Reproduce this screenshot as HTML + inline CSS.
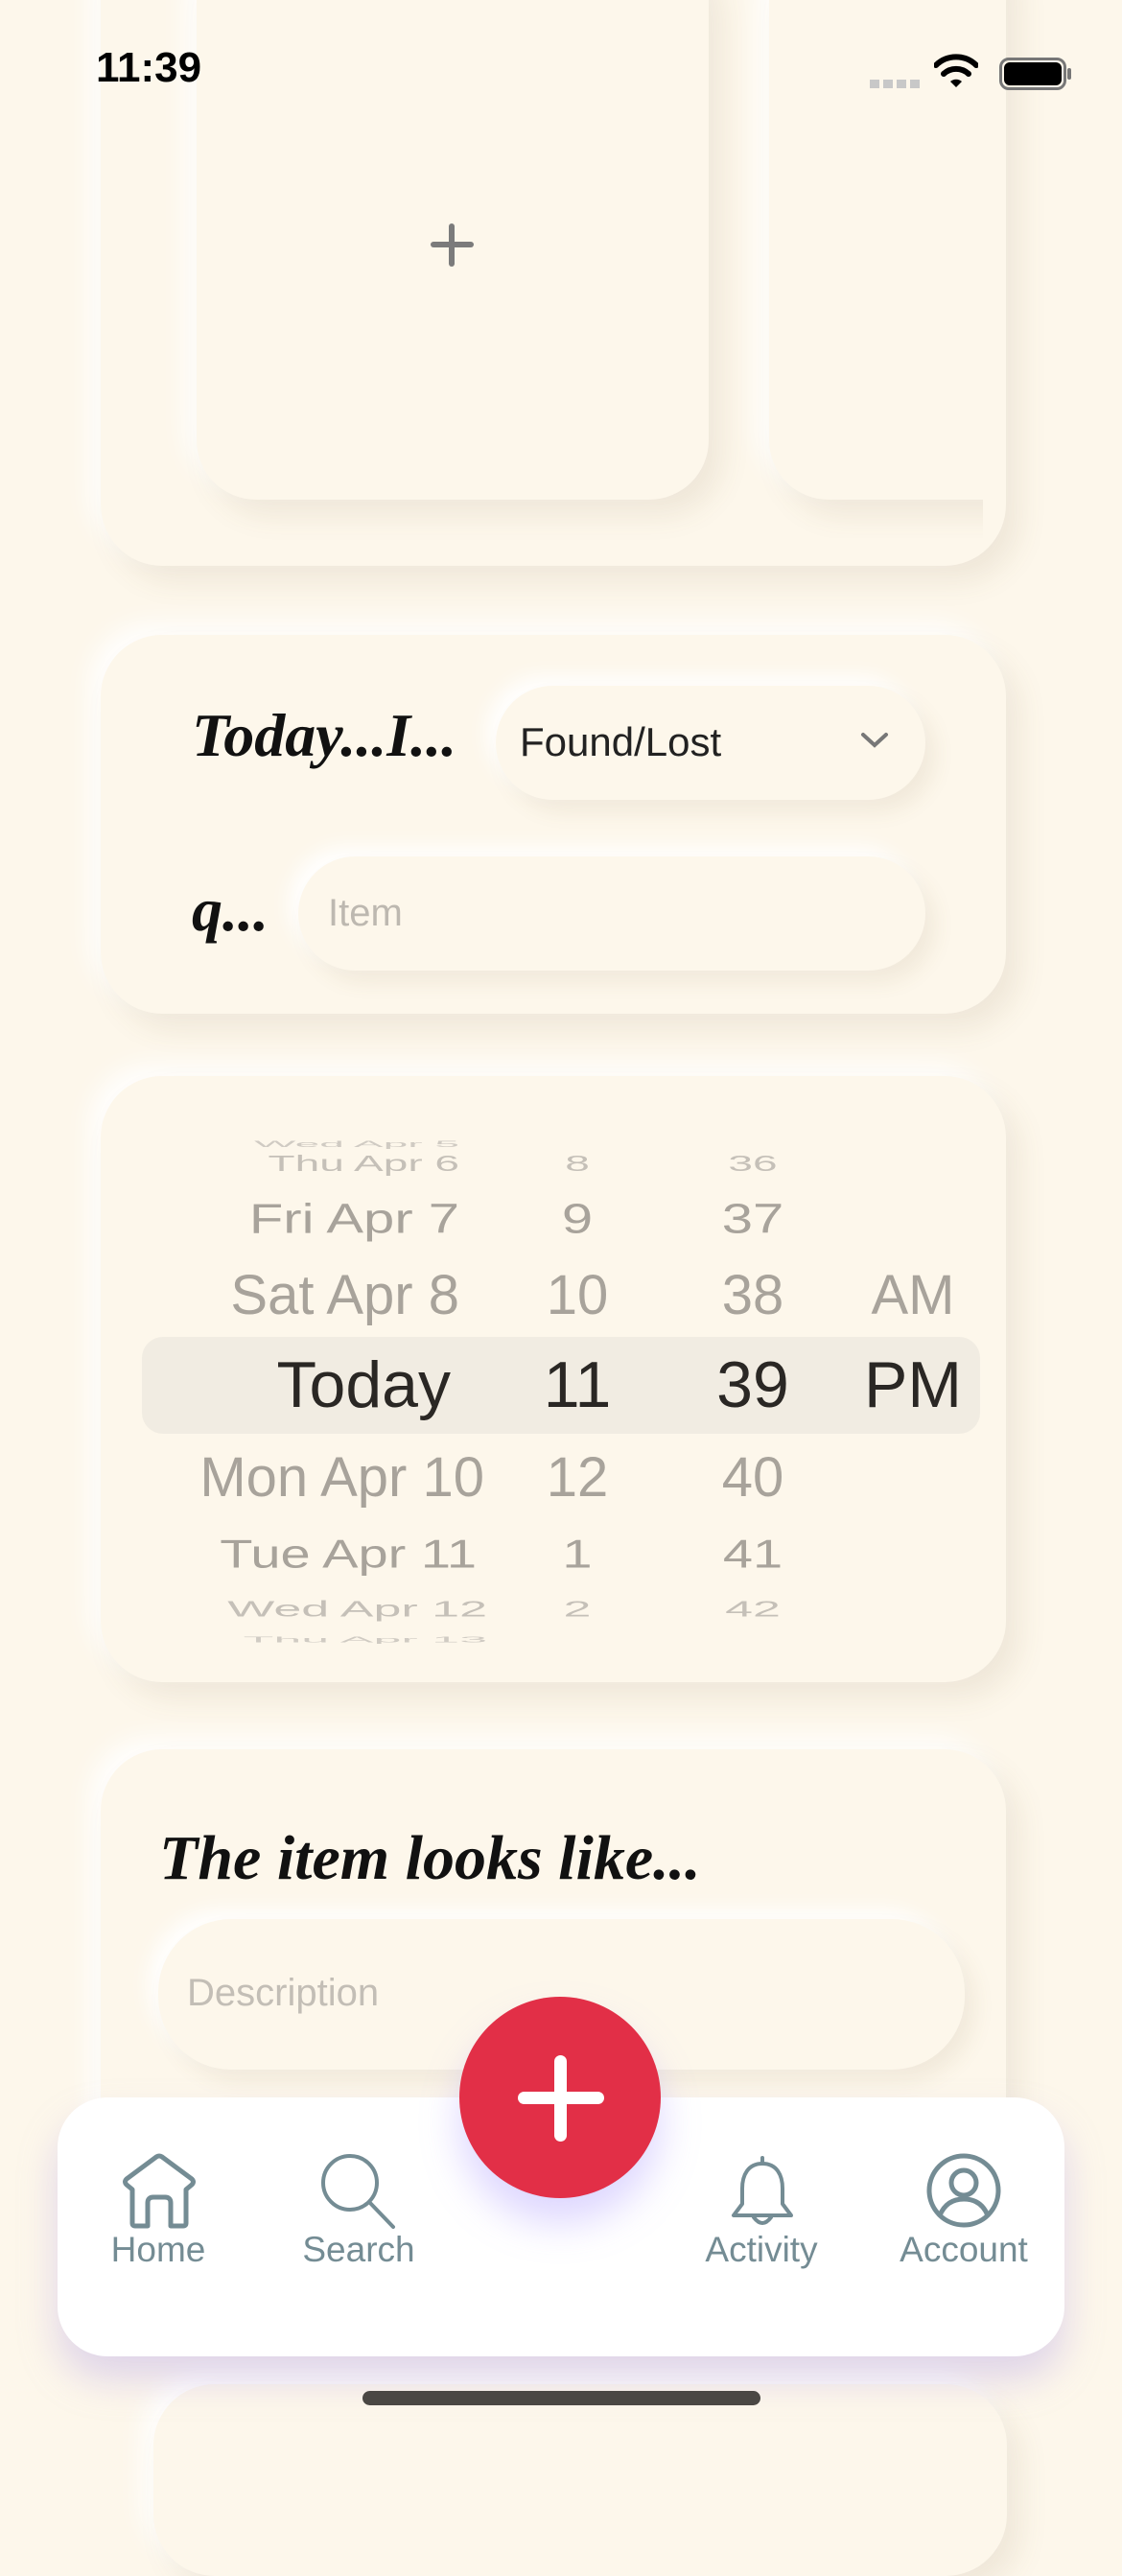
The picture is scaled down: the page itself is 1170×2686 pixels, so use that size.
<!DOCTYPE html>
<html><head><meta charset="utf-8"><style>
*{margin:0;padding:0;box-sizing:border-box}
body{width:1170px;height:2532px;background:#fdf7eb;position:relative;overflow:hidden;font-family:"Liberation Sans",sans-serif}
.abs{position:absolute}
.card{position:absolute;background:#fdf7eb;border-radius:64px;box-shadow:14px 16px 30px rgba(120,100,60,0.10),-12px -12px 26px rgba(255,255,255,0.9)}
.pill{position:absolute;background:#fdf7eb;border-radius:70px;box-shadow:10px 12px 22px rgba(120,100,60,0.09),-10px -10px 20px rgba(255,255,255,0.95)}
.script{font-family:"Liberation Serif",serif;font-style:italic;font-weight:bold;color:#111;position:absolute}
.p{position:absolute;color:#a8a39b;white-space:nowrap;line-height:1}
.tab{position:absolute;text-align:center;width:220px;color:#748c94;font-size:37px;top:2327px;line-height:1}
</style></head><body>
<div class="card" style="left:105px;top:-80px;width:944px;height:670px"></div>
<div class="card" style="left:205px;top:-60px;width:534px;height:581px;border-radius:62px"></div>
<div class="card" style="left:802px;top:-60px;width:300px;height:581px;border-radius:62px;clip-path:inset(-40px 77px -40px -40px)"></div>
<div class="abs" style="left:449px;top:252px;width:45px;height:6px;background:#7b7b7b;border-radius:3px"></div>
<div class="abs" style="left:468px;top:233px;width:6px;height:45px;background:#7b7b7b;border-radius:3px"></div>

<div class="abs" style="left:100px;top:46px;font-size:44px;font-weight:bold;color:#000">11:39</div>
<div class="abs" style="left:907px;top:83px;width:52px;height:9px;background:repeating-linear-gradient(90deg,#c8c8c8 0 10px,transparent 10px 14px)"></div>
<svg class="abs" style="left:974px;top:56px" width="46" height="36" viewBox="0 0 46 36"><path d="M2 12 A30 30 0 0 1 44 12" stroke="#000" stroke-width="6" fill="none" stroke-linecap="round"/><path d="M10 21 A19 19 0 0 1 36 21" stroke="#000" stroke-width="6" fill="none" stroke-linecap="round"/><path d="M17 29 L23 35 L29 29 A9 9 0 0 0 17 29Z" fill="#000"/></svg>
<div class="abs" style="left:1042px;top:60px;width:70px;height:34px;border:3px solid #777;border-radius:10px"></div>
<div class="abs" style="left:1047px;top:65px;width:60px;height:24px;background:#000;border-radius:6px"></div>
<div class="abs" style="left:1113px;top:71px;width:4px;height:12px;background:#777;border-radius:2px"></div>

<div class="card" style="left:105px;top:662px;width:944px;height:395px"></div>
<div class="script" style="left:200px;top:730px;font-size:64px">Today...I...</div>
<div class="pill" style="left:517px;top:715px;width:448px;height:119px"></div>
<div class="abs" style="left:542px;top:750px;font-size:42px;color:#222">Found/Lost</div>
<svg class="abs" style="left:896px;top:762px" width="32" height="20"><path d="M4 4 L16 15 L28 4" stroke="#777" stroke-width="4" fill="none" stroke-linecap="round"/></svg>
<div class="script" style="left:200px;top:912px;font-size:64px">q...</div>
<div class="pill" style="left:311px;top:893px;width:654px;height:119px"></div>
<div class="abs" style="left:342px;top:930px;font-size:40px;color:#bdb8b0">Item</div>

<div class="card" style="left:105px;top:1122px;width:944px;height:632px"></div>
<div class="abs" style="left:148px;top:1394px;width:874px;height:101px;background:#f1ece2;border-radius:22px"></div>
<div class="p" style="right:691px;top:1170px;font-size:46px;transform:scaleY(.2);color:#d0cbc3">Wed Apr 5</div>
<div class="p" style="right:691px;top:1190px;font-size:46px;transform:scaleY(.5);color:#c5c0b8">Thu Apr 6</div>
<div class="p" style="left:580px;width:44px;text-align:center;top:1190px;font-size:46px;transform:scaleY(.5);color:#c5c0b8">8</div>
<div class="p" style="left:730px;width:110px;text-align:center;top:1190px;font-size:46px;transform:scaleY(.5);color:#c5c0b8">36</div>
<div class="p" style="right:691px;top:1242px;font-size:58px;transform:scaleY(.75)">Fri Apr 7</div>
<div class="p" style="left:570px;width:64px;text-align:center;top:1242px;font-size:58px;transform:scaleY(.75)">9</div>
<div class="p" style="left:730px;width:110px;text-align:center;top:1242px;font-size:58px;transform:scaleY(.75)">37</div>
<div class="p" style="right:691px;top:1322px;font-size:58px">Sat Apr 8</div>
<div class="p" style="left:550px;width:104px;text-align:center;top:1322px;font-size:58px">10</div>
<div class="p" style="left:730px;width:110px;text-align:center;top:1322px;font-size:58px">38</div>
<div class="p" style="left:890px;width:124px;text-align:center;top:1322px;font-size:58px">AM</div>
<div class="p" style="right:700px;top:1410px;font-size:68px;color:#2a2724">Today</div>
<div class="p" style="left:545px;width:114px;text-align:center;top:1410px;font-size:68px;color:#2a2724">11</div>
<div class="p" style="left:725px;width:120px;text-align:center;top:1410px;font-size:68px;color:#2a2724">39</div>
<div class="p" style="left:885px;width:134px;text-align:center;top:1410px;font-size:68px;color:#2a2724">PM</div>
<div class="p" style="right:665px;top:1512px;font-size:58px">Mon Apr 10</div>
<div class="p" style="left:550px;width:104px;text-align:center;top:1512px;font-size:58px">12</div>
<div class="p" style="left:730px;width:110px;text-align:center;top:1512px;font-size:58px">40</div>
<div class="p" style="right:673px;top:1592px;font-size:56px;transform:scaleY(.75)">Tue Apr 11</div>
<div class="p" style="left:570px;width:64px;text-align:center;top:1592px;font-size:56px;transform:scaleY(.75)">1</div>
<div class="p" style="left:730px;width:110px;text-align:center;top:1592px;font-size:56px;transform:scaleY(.75)">41</div>
<div class="p" style="right:662px;top:1652px;font-size:52px;transform:scaleY(.45);color:#c5c0b8">Wed Apr 12</div>
<div class="p" style="left:580px;width:44px;text-align:center;top:1652px;font-size:52px;transform:scaleY(.45);color:#c5c0b8">2</div>
<div class="p" style="left:730px;width:110px;text-align:center;top:1652px;font-size:52px;transform:scaleY(.45);color:#c5c0b8">42</div>
<div class="p" style="right:662px;top:1684px;font-size:52px;transform:scaleY(.15);color:#d0cbc3">Thu Apr 13</div>

<div class="card" style="left:105px;top:1824px;width:944px;height:560px"></div>
<div class="script" style="left:166px;top:1900px;font-size:66px">The item looks like...</div>
<div class="pill" style="left:165px;top:2001px;width:841px;height:157px;border-radius:76px"></div>
<div class="abs" style="left:195px;top:2056px;font-size:40px;color:#c3beb6">Description</div>

<div class="card" style="left:160px;top:2486px;width:890px;height:200px"></div>

<div class="abs" style="left:60px;top:2187px;width:1050px;height:270px;background:#fff;border-radius:52px;box-shadow:0 24px 40px rgba(170,150,230,0.35)"></div>
<div class="abs" style="left:479px;top:2082px;width:210px;height:210px;border-radius:50%;background:#e22f47;box-shadow:0 26px 40px rgba(160,140,255,0.35)"></div>
<div class="abs" style="left:540px;top:2181px;width:90px;height:13px;background:#fff;border-radius:7px"></div>
<div class="abs" style="left:578px;top:2143px;width:13px;height:90px;background:#fff;border-radius:7px"></div>

<svg class="abs" style="left:125px;top:2245px" width="82" height="82" viewBox="0 0 82 82"><path d="M13 38 L7 33 Q4 30 7 27 L38 4 Q41 2 44 4 L75 27 Q78 30 75 33 L69 38 V73 Q69 76 66 76 H53 V52 Q53 46 47 46 H35 Q29 46 29 52 V76 H16 Q13 76 13 73 Z" stroke="#748c94" stroke-width="5" fill="none" stroke-linejoin="round"/></svg>
<div class="tab" style="left:55px">Home</div>
<svg class="abs" style="left:334px;top:2246px" width="80" height="80" viewBox="0 0 80 80"><circle cx="31" cy="30" r="28" stroke="#748c94" stroke-width="4" fill="none"/><path d="M51 50 L76 76" stroke="#748c94" stroke-width="4" stroke-linecap="round"/></svg>
<div class="tab" style="left:264px">Search</div>
<svg class="abs" style="left:760px;top:2246px" width="70" height="80" viewBox="0 0 70 80"><path d="M35 4 V10 M35 10 C20 10 14 22 14 36 V52 L5 64 H65 L56 52 V36 C56 22 50 10 35 10 Z M26 66 Q35 78 44 66" stroke="#748c94" stroke-width="4" fill="none" stroke-linejoin="round" stroke-linecap="round"/></svg>
<div class="tab" style="left:684px">Activity</div>
<svg class="abs" style="left:965px;top:2244px" width="80" height="80" viewBox="0 0 80 80"><circle cx="40" cy="40" r="36" stroke="#748c94" stroke-width="5" fill="none"/><circle cx="40" cy="32" r="13" stroke="#748c94" stroke-width="5" fill="none"/><path d="M15 66 Q22 49 40 49 Q58 49 65 66" stroke="#748c94" stroke-width="5" fill="none"/></svg>
<div class="tab" style="left:895px">Account</div>

<div class="abs" style="left:378px;top:2493px;width:415px;height:15px;background:#4a4744;border-radius:8px"></div>
</body></html>
